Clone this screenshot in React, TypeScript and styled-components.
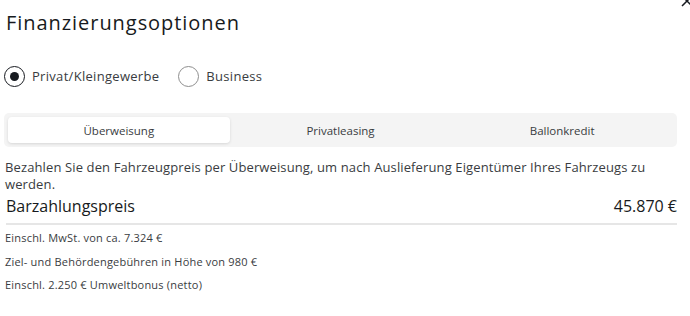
import React, { useState } from "react";
import styled, { createGlobalStyle } from "styled-components";

const Global = createGlobalStyle`
  html, body { margin: 0; padding: 0; background: #fff; }
  body { font-family: "Open Sans", "Liberation Sans", sans-serif; color: #171a20; }
  * { box-sizing: border-box; }
`;

const Page = styled.div`
  position: relative;
  width: 690px;
  height: 316px;
  overflow: hidden;
  padding: 0 13px 0 4px;
`;

const Close = styled.button`
  position: absolute;
  top: -6px;
  right: -4px;
  width: 14px;
  height: 14px;
  border: 0;
  padding: 0;
  background: transparent;
  svg { display: block; }
`;

const Title = styled.h1`
  margin: 0;
  padding: 9px 0 0 2px;
  font-size: 20px;
  line-height: 28px;
  font-weight: 400;
  letter-spacing: 0.95px;
  color: #171a20;
`;

const RadioRow = styled.div`
  display: flex;
  align-items: center;
  gap: 19px;
  margin-top: 28px;
  height: 22px;
`;

const RadioLabel = styled.label`
  display: flex;
  align-items: center;
  gap: 7px;
  font-size: 13px;
  letter-spacing: 0.3px;
  color: #393c41;
  cursor: pointer;
`;

const Circle = styled.span<{ $on: boolean }>`
  width: 21px;
  height: 21px;
  border-radius: 50%;
  border: 1.5px solid ${(p) => (p.$on ? "#171a20" : "#8e8e8e")};
  display: flex;
  align-items: center;
  justify-content: center;
  &::after {
    content: "";
    width: 9px;
    height: 9px;
    border-radius: 50%;
    background: #171a20;
    display: ${(p) => (p.$on ? "block" : "none")};
  }
`;

const Tabs = styled.div`
  margin-top: 26px;
  background: #f4f4f4;
  border-radius: 5px;
  padding: 4px;
  display: grid;
  grid-template-columns: repeat(3, 1fr);
  height: 34px;
`;

const Tab = styled.button<{ $active: boolean }>`
  border: 0;
  border-radius: 4px;
  background: ${(p) => (p.$active ? "#fff" : "transparent")};
  box-shadow: ${(p) => (p.$active ? "0 1px 3px rgba(0,0,0,0.12)" : "none")};
  font-family: inherit;
  font-size: 11.5px;
  color: #393c41;
  padding: 0;
  cursor: pointer;
`;

const Desc = styled.p`
  margin: 12px 0 0 1px;
  font-size: 13px;
  line-height: 17px;
  letter-spacing: 0.12px;
  color: #393c41;
`;

const PriceRow = styled.div`
  display: flex;
  justify-content: space-between;
  align-items: baseline;
  margin: 2px 0 0 2px;
  font-size: 16px;
  line-height: 22px;
  color: #171a20;
  padding-bottom: 6px;
  border-bottom: 2px solid #e6e6e6;
`;

const Notes = styled.ul`
  list-style: none;
  margin: 5px 0 0 1px;
  padding: 0;
  display: flex;
  flex-direction: column;
  gap: 7.5px;
`;

const Note = styled.li`
  font-size: 11px;
  line-height: 16px;
  letter-spacing: 0.2px;
  color: #393c41;
`;

export default function App() {
  const [kind, setKind] = useState("privat");
  const [tab, setTab] = useState(0);
  const tabs = ["Überweisung", "Privatleasing", "Ballonkredit"];
  return (
    <>
      <Global />
      <Page>
        <Close aria-label="Schließen">
          <svg width="14" height="14" viewBox="0 0 14 14">
            <path d="M2 2 L12 12 M12 2 L2 12" stroke="#171a20" strokeWidth="1.5" />
          </svg>
        </Close>
        <Title>Finanzierungsoptionen</Title>
        <RadioRow>
          <RadioLabel onClick={() => setKind("privat")}>
            <Circle $on={kind === "privat"} />
            Privat/Kleingewerbe
          </RadioLabel>
          <RadioLabel onClick={() => setKind("business")}>
            <Circle $on={kind === "business"} />
            Business
          </RadioLabel>
        </RadioRow>
        <Tabs>
          {tabs.map((t, i) => (
            <Tab key={t} $active={tab === i} onClick={() => setTab(i)}>
              {t}
            </Tab>
          ))}
        </Tabs>
        <Desc>
          Bezahlen Sie den Fahrzeugpreis per Überweisung, um nach Auslieferung Eigentümer Ihres
          Fahrzeugs zu werden.
        </Desc>
        <PriceRow>
          <span>Barzahlungspreis</span>
          <span>45.870 €</span>
        </PriceRow>
        <Notes>
          <Note>Einschl. MwSt. von ca. 7.324 €</Note>
          <Note>Ziel- und Behördengebühren in Höhe von 980 €</Note>
          <Note>Einschl. 2.250 € Umweltbonus (netto)</Note>
        </Notes>
      </Page>
    </>
  );
}
